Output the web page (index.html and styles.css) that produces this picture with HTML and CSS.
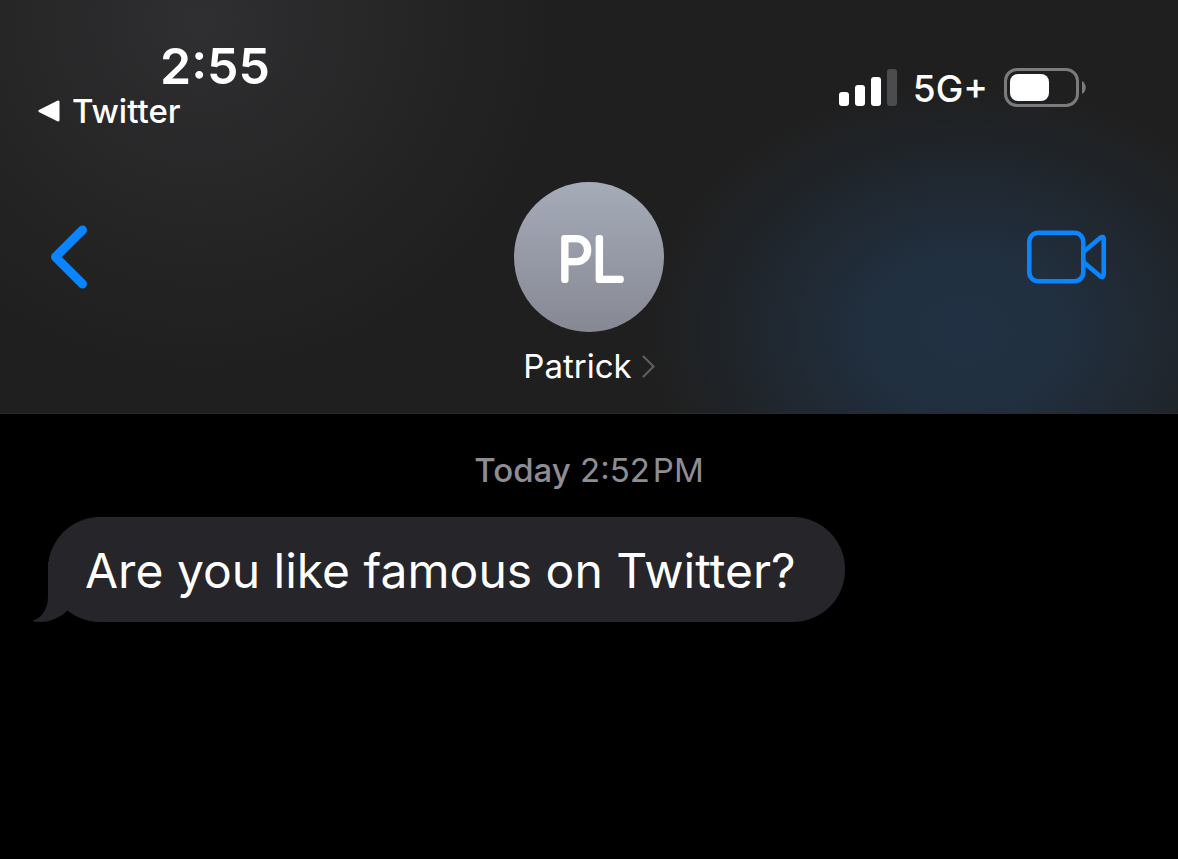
FILE: index.html
```html
<!DOCTYPE html>
<html lang="en">
<head>
  <meta charset="UTF-8">
  <meta name="viewport" content="width=device-width, initial-scale=1">
  <title>Patrick</title>
  <link rel="stylesheet" href="styles.css">
</head>
<body>
<header class="header">
  <div class="status-bar">
    <div class="status-left">
      <time class="clock">2:55</time>
      <a class="return-link" href="#">
        <svg width="22" height="22" viewBox="0 0 22 22" aria-hidden="true">
          <path d="M2 11 L20 2 V20 Z" fill="#fff" stroke="#fff" stroke-width="3" stroke-linejoin="round"/>
        </svg>
        Twitter
      </a>
    </div>
    <div class="status-right">
      <svg width="58" height="38" viewBox="0 0 58 38" aria-hidden="true">
        <rect x="0" y="23" width="10" height="14" rx="3" fill="#fff"/>
        <rect x="16" y="16" width="10" height="21" rx="3" fill="#fff"/>
        <rect x="32" y="8" width="10" height="29" rx="3" fill="#fff"/>
        <rect x="48" y="0" width="10" height="37" rx="3" fill="#4c4c4e"/>
      </svg>
      <span class="network">5G+</span>
      <svg width="82" height="40" viewBox="0 0 82 40" aria-hidden="true">
        <rect x="1.5" y="1.5" width="72" height="36" rx="11.5" fill="none" stroke="#7b7b7d" stroke-width="3"/>
        <rect x="6" y="6" width="39" height="27" rx="8" fill="#fff"/>
        <path d="M78 13 C83 16 83 23 78 26 Z" fill="#7b7b7d"/>
      </svg>
    </div>
  </div>

  <nav class="nav-bar">
    <button class="nav-button" type="button" aria-label="Back">
      <svg width="38" height="64" viewBox="0 0 38 64" aria-hidden="true">
        <path d="M32.5 5 L5.5 32 L32.5 59" fill="none" stroke="#0a84ff" stroke-width="9" stroke-linecap="round" stroke-linejoin="round"/>
      </svg>
    </button>
    <a class="contact" href="#">
      <svg class="avatar" viewBox="0 0 150 150">
        <text class="initials" x="77" y="98" text-anchor="middle">PL</text>
      </svg>
      <span class="contact-name">
        Patrick
        <svg width="13" height="23" viewBox="0 0 13 23" aria-hidden="true">
          <path d="M1.5 1.5 L11.5 11.5 L1.5 21.5" fill="none" stroke="#5c5c5f" stroke-width="2.4" stroke-linecap="round" stroke-linejoin="round"/>
        </svg>
      </span>
    </a>
    <button class="nav-button video" type="button" aria-label="Video call">
      <svg width="80" height="54" viewBox="0 0 80 54" aria-hidden="true">
        <g fill="none" stroke="#0a84ff" stroke-width="4.6" stroke-linejoin="round">
          <rect x="2.3" y="2.8" width="54" height="48.4" rx="9"/>
          <path d="M56.3 22 L73 8 Q76.7 5.5 76.7 9 V44 Q76.7 48.5 73 46 L56.3 32"/>
        </g>
      </svg>
    </button>
  </nav>
</header>

<main class="thread">
  <p class="timestamp"><strong>Today</strong> 2:52&#8202;PM</p>
  <div class="bubble">
    Are you like famous on Twitter?
    <svg class="tail" width="40" height="60" viewBox="0 0 40 60" aria-hidden="true">
      <path d="M16 0 V34 C16 47 10 56 0 59 C13 62 25 58 35 49 L40 30 V0 Z" fill="#262529"/>
    </svg>
  </div>
</main>
</body>
</html>
```
FILE: styles.css
```css
* { box-sizing: border-box; }

body {
  margin: 0;
  min-height: 100vh;
  background-color: #000;
  color: #fff;
  font-family: Inter, "Liberation Sans", sans-serif;
}

a {
  color: inherit;
  text-decoration: none;
}

svg {
  display: block;
  flex: none;
}

.header {
  padding: 40px 0 27px;
  border-bottom: 1px solid #29292b;
  background:
    radial-gradient(ellipse 27% 60% at 82% 80%, #213143 0%, rgba(33, 49, 67, 0.9) 30%, rgba(33, 49, 67, 0.35) 70%, rgba(33, 49, 67, 0) 100%),
    radial-gradient(ellipse 30% 85% at 17% 5%, #2f2f31 0%, rgba(44, 44, 46, 0.65) 45%, rgba(31, 31, 31, 0) 100%),
    #1f1f1f;
}

.status-bar {
  display: flex;
  justify-content: space-between;
  align-items: center;
  padding: 0 92px 0 38px;
}

.status-left {
  display: flex;
  flex-direction: column;
}

.clock {
  padding-left: 122px;
  font-size: 50px;
  font-weight: 600;
  line-height: 52px;
}

.return-link {
  display: flex;
  align-items: center;
  gap: 12px;
  font-size: 33px;
  font-weight: 500;
  line-height: 38px;
}

.status-right {
  display: flex;
  align-items: center;
  gap: 16px;
  padding-top: 6px;
}

.network {
  padding-top: 2px;
  font-size: 37px;
  font-weight: 500;
  line-height: 40px;
}

.nav-bar {
  display: grid;
  grid-template-columns: 1fr auto 1fr;
  align-items: start;
  padding: 52px 50px 0;
}

.nav-button {
  display: flex;
  align-items: center;
  height: 150px;
  padding: 0;
  border: none;
  background: none;
  cursor: pointer;
}

.video {
  justify-self: end;
  margin-right: 21px;
}

.contact {
  display: flex;
  flex-direction: column;
  align-items: center;
  gap: 14px;
}

.avatar {
  width: 150px;
  height: 150px;
  border-radius: 50%;
  background: linear-gradient(#a6abb9, #868993);
}

/* the round stroke softens the ends of the letters */
.initials {
  font-size: 57px;
  font-weight: 100;
  fill: #fff;
  stroke: #fff;
  stroke-width: 6px;
  stroke-linejoin: round;
}

.contact-name {
  display: flex;
  align-items: center;
  gap: 10px;
  font-size: 33px;
  line-height: 40px;
}

.thread {
  padding: 36px 48px;
}

.timestamp {
  margin: 0 0 27px;
  color: #8d8d93;
  font-size: 33px;
  line-height: 40px;
  text-align: center;
}

.timestamp strong {
  font-weight: 500;
}

.bubble {
  position: relative;
  width: fit-content;
  padding: 24px 50px 21px 37px;
  border-radius: 52px;
  background-color: #262529;
  font-size: 48px;
  line-height: 60px;
}

.tail {
  position: absolute;
  left: -16px;
  bottom: 0;
}
```
